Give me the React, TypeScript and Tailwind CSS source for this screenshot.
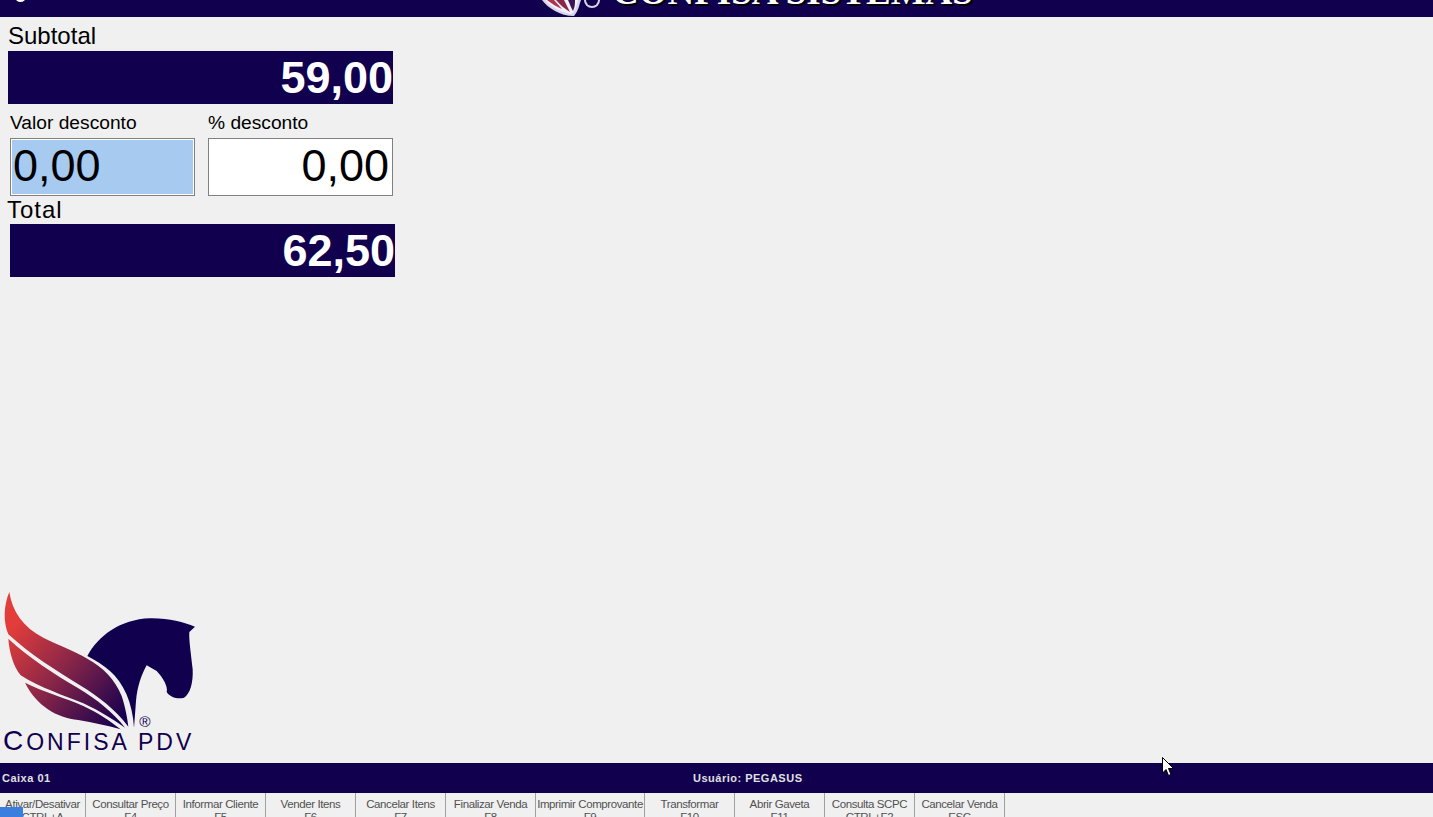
import React from 'react';

const shortcuts = [
  { label: 'Ativar/Desativar', key: 'CTRL+A', width: 'w-[86px]' },
  { label: 'Consultar Preço', key: 'F4', width: 'w-[90px]' },
  { label: 'Informar Cliente', key: 'F5', width: 'w-[90px]' },
  { label: 'Vender Itens', key: 'F6', width: 'w-[90px]' },
  { label: 'Cancelar Itens', key: 'F7', width: 'w-[90px]' },
  { label: 'Finalizar Venda', key: 'F8', width: 'w-[90px]' },
  { label: 'Imprimir Comprovante', key: 'F9', width: 'w-[109px]' },
  { label: 'Transformar', key: 'F10', width: 'w-[90px]' },
  { label: 'Abrir Gaveta', key: 'F11', width: 'w-[90px]' },
  { label: 'Consulta SCPC', key: 'CTRL+F2', width: 'w-[90px]' },
  { label: 'Cancelar Venda', key: 'ESC', width: 'w-[90px]' },
];

const PegasusLogo = () => (
  <svg viewBox="0 0 630 435" className="w-[210px] h-[145px] overflow-visible">
    <defs>
      <linearGradient id="wing" x1="40" y1="120" x2="370" y2="400" gradientUnits="userSpaceOnUse">
        <stop offset="0" stopColor="#e23d3a" />
        <stop offset="0.45" stopColor="#8a2648" />
        <stop offset="1" stopColor="#14004f" />
      </linearGradient>
    </defs>
    <path
      fill="#10004e"
      d="M262 210 C295 150 360 100 450 97 C505 96 550 108 585 122 L568 138 C566 160 574 210 578 250 C580 290 570 325 552 335 C535 340 510 335 500 318 C505 305 490 275 470 255 L440 238 C425 265 412 300 408 345 L402 425 C398 350 370 290 330 255 C310 238 285 222 262 210 Z"
    />
    <path
      fill="url(#wing)"
      d="M28 18 C36 75 70 125 130 155 C180 180 225 195 262 218 C310 245 345 280 365 330 C375 360 382 395 385 422 C345 370 300 335 240 298 C170 255 90 205 25 145 C10 110 10 60 28 18 Z"
    />
    <path
      fill="url(#wing)"
      d="M25 158 C85 215 165 265 235 307 C290 340 340 380 375 425 C335 398 300 375 250 352 C190 328 120 305 62 268 C40 240 28 200 25 158 Z"
    />
    <path
      fill="url(#wing)"
      d="M75 290 C135 320 195 335 250 360 C290 378 330 405 362 430 C320 418 280 410 235 402 C170 395 110 360 75 290 Z"
    />
    <text x="435" y="424" fill="#10004e" fontSize="46" fontFamily="'Liberation Sans', sans-serif" textAnchor="middle">
      ®
    </text>
  </svg>
);

const MiniLogo = () => (
  <svg viewBox="0 0 60 17" className="w-[60px] h-[17px] shrink-0">
    <path fill="#d9d4ea" d="M2 0 C8 8 20 16 34 16 C39 10 39 5 41 0 Z" />
    <path fill="#f4f2f8" d="M5 0 C11 7 22 13 32 14 C36 9 37 4 38 0 Z" />
    <path fill="#b3304c" d="M7 0 C12 4 17 7 22 9 L14 0 Z" />
    <path fill="#8a2648" d="M16 0 C20 5 25 9 30 12 L24 0 Z" />
    <path fill="#3a1458" d="M28 0 C30 4 31 8 33 11 C35 7 35 3 35 0 Z" />
    <circle cx="52" cy="0" r="8" fill="#d9d4ea" />
    <circle cx="52" cy="0" r="6" fill="#10004e" />
  </svg>
);

const DarkField = ({ value }: { value: string }) => (
  <div className="h-[53px] bg-[#10004e] flex items-center justify-end text-white font-bold text-[45px] leading-none">
    {value}
  </div>
);

const App = () => {
  return (
    <div className="relative w-full h-[817px] overflow-hidden flex flex-col bg-[#f0f0f0] font-['Liberation_Sans',sans-serif]">
      <header className="h-[17px] shrink-0 bg-[#10004e] overflow-hidden flex items-start">
        <div className="w-[11px] h-[11px] rounded-full bg-white ml-[15px] -mt-[9px] shrink-0" />
        <div className="ml-[514px]">
          <MiniLogo />
        </div>
        <div className="ml-[12px] -mt-[27px] text-[37px] leading-[37px] font-bold text-white whitespace-nowrap font-['Liberation_Serif',serif] [text-shadow:2px_2px_0_#000]">
          CONFISA SISTEMAS
        </div>
      </header>

      <main className="flex-1 flex flex-col justify-between pb-[11px]">
        <div className="w-[395px] text-black">
          <div className="pl-2 pt-[6px] pb-[2px] text-[24px] leading-[26px]">Subtotal</div>
          <div className="ml-2 mr-[2px]">
            <DarkField value="59,00" />
          </div>
          <div className="flex mt-[8px] ml-[10px] mr-[2px] gap-[13px]">
            <div className="w-[185px]">
              <div className="text-[19.2px] leading-[22px] mb-[4px]">Valor desconto</div>
              <div className="h-[58px] border border-[#808080] bg-[#a6caf0] ring-1 ring-inset ring-white flex items-center pl-[2px] pb-[4px] text-[45px] leading-none">
                0,00
              </div>
            </div>
            <div className="w-[185px]">
              <div className="text-[19.2px] leading-[22px] mb-[4px]">% desconto</div>
              <div className="h-[58px] border border-[#808080] bg-white flex items-center justify-end pr-[3px] pb-[4px] text-[45px] leading-none">
                0,00
              </div>
            </div>
          </div>
          <div className="pl-[7px] text-[24px] tracking-[1px] leading-[28px]">Total</div>
          <div className="ml-[10px]">
            <DarkField value="62,50" />
          </div>
        </div>

        <div>
          <PegasusLogo />
          <div className="-mt-[1px] pl-[3px] h-[22px] text-[#10004e] text-[23px] leading-[22px] tracking-[3px] whitespace-nowrap">
            <span className="text-[28px]">C</span>ONFISA PDV
          </div>
        </div>
      </main>

      <div className="h-[30px] shrink-0 bg-[#10004e] flex items-center text-[#e0e0e0] text-[11px] font-bold tracking-[0.5px]">
        <div className="w-[693px] pl-[2px]">Caixa 01</div>
        <div>Usuário: PEGASUS</div>
      </div>

      <div className="h-[24px] shrink-0 flex overflow-hidden">
        {shortcuts.map((s) => (
          <div
            key={s.label}
            className={`${s.width} shrink-0 h-[34px] border-r border-[#a0a0a0] text-center text-[#505050] text-[11.5px] tracking-[-0.4px] leading-[13px] pt-[5px] whitespace-nowrap overflow-hidden`}
          >
            <div>{s.label}</div>
            <div>{s.key}</div>
          </div>
        ))}
      </div>

      {/* start button corner poking over the bar */}
      <div className="absolute left-0 bottom-0 w-[23px] h-[10px] bg-[#3a7fe0]" />

      {/* mouse pointer */}
      <svg viewBox="0 0 12 19" className="absolute left-[1162px] top-[757px] w-[12px] h-[19px]">
        <path d="M0.5 0.5 V16 L4 12.5 L6.5 18.5 L9 17.5 L6.5 11.5 H11.5 Z" fill="#fff" stroke="#000" strokeWidth="1" />
      </svg>
    </div>
  );
};

export default App;
